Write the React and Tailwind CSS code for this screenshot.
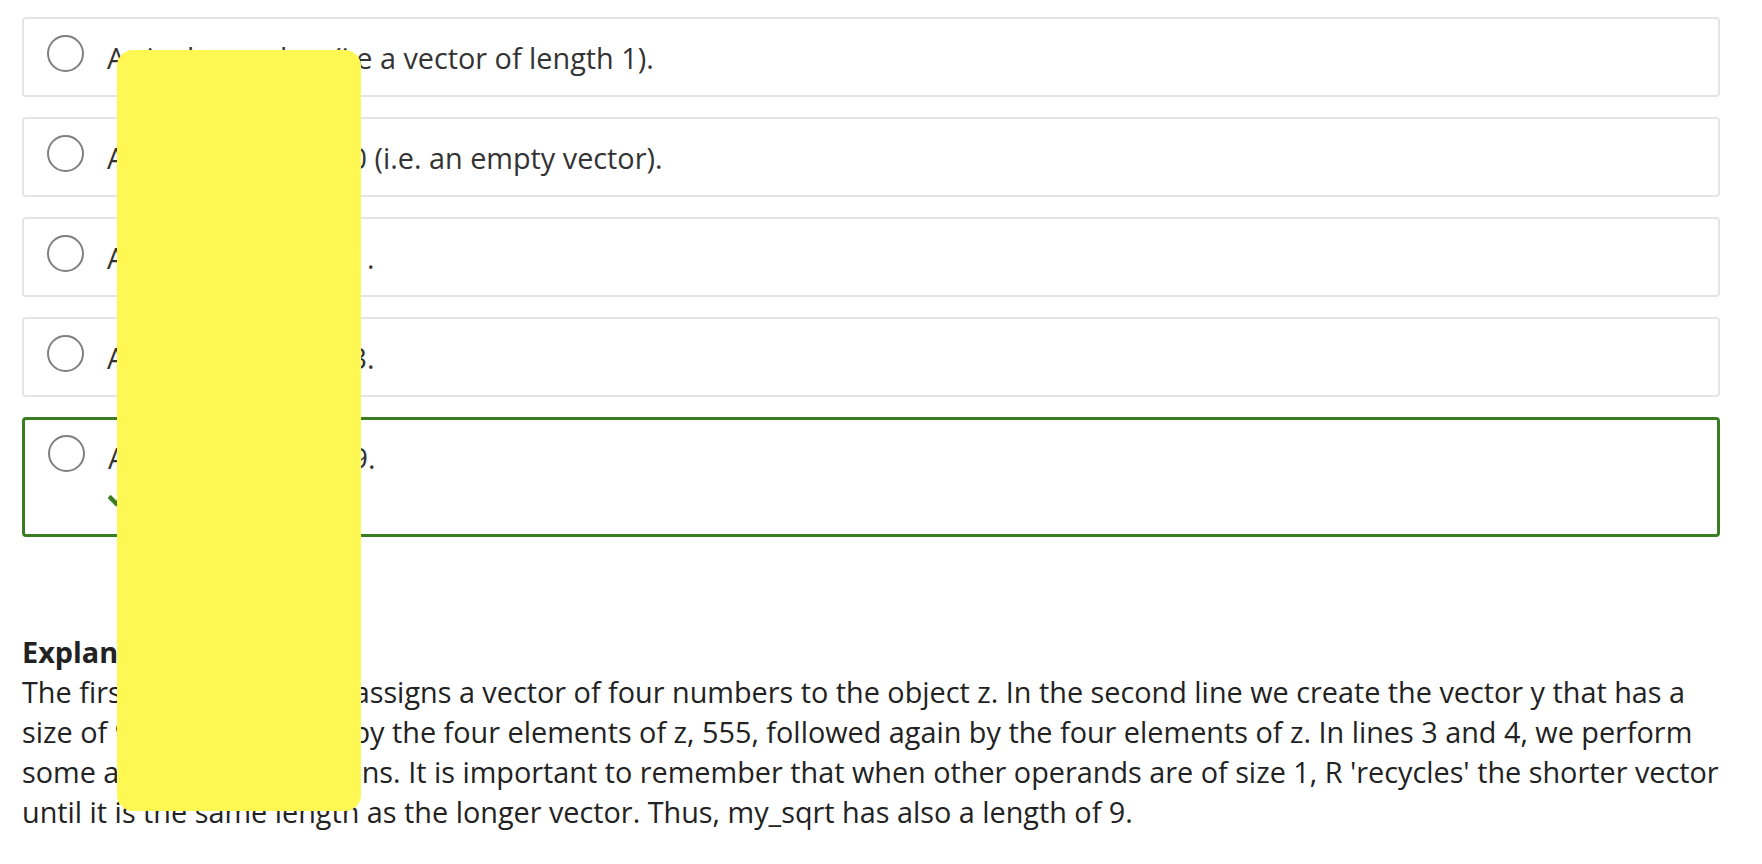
import { FaCheck } from "react-icons/fa";

const options = [
  { id: "a", text: "A single number (i.e a vector of length 1)." },
  { id: "b", text: "A vector of length 0 (i.e. an empty vector)." },
  { id: "c", text: "A vector of length 1." },
  { id: "d", text: "A vector of length 3." },
  { id: "e", text: "A vector of length 9.", correct: true },
];

function OptionCard({ option }) {
  return (
    <div
      className={`rounded-[4px] bg-white px-[23px] ${
        option.correct
          ? "border-[3px] border-[#3b7d23] pt-[15px] pb-4"
          : "border-2 border-[#e4e4e4] pt-4 pb-[17px]"
      }`}>
      <div className="flex items-start">
        {/* Radio */}
        <div className="w-[37px] h-[37px] shrink-0 rounded-full border-2 border-[#808080]" />
        <div className="ml-[23px] mt-[3px]">
          <p className="leading-[40px] text-[28.8px] text-[#333]">{option.text}</p>
          {option.correct && (
            <div className="flex items-center h-[40px] gap-2 text-[#3b7d23]">
              <FaCheck className="w-[22px] h-[22px]" />
              <span className="text-[22px] font-semibold">Correct answer</span>
            </div>
          )}
        </div>
      </div>
    </div>
  );
}

export default function App() {
  return (
    <div
      className="relative min-h-[864px] bg-white pl-[22px] pr-[42px] pt-[17px]"
      style={{ fontFamily: '"Open Sans", "Noto Sans", sans-serif' }}>
      {/* Answer options */}
      <div className="flex flex-col gap-5">
        {options.map(option => (
          <OptionCard key={option.id} option={option} />
        ))}
      </div>

      {/* Explanation */}
      <div className="mt-[95px] text-[28.8px] leading-[40px] text-[#222]">
        <p className="font-bold">Explanation:</p>
        <p>
          The first line of the code assigns a vector of four numbers to the
          object z. In the second line we create the vector y that has a
          <br />
          size of 9 and is made up by the four elements of z, 555, followed
          again by the four elements of z. In lines 3 and 4, we perform
          <br />
          some arithmetic operations. It is important to remember that when
          other operands are of size 1, R 'recycles' the shorter vector
          <br />
          until it is the same length as the longer vector. Thus, my_sqrt has
          also a length of 9.
        </p>
      </div>

      {/* Redaction block */}
      <div className="absolute left-[117px] top-[50px] w-[244px] h-[761px] rounded-[16px] bg-[#fff852]" />
    </div>
  );
}
